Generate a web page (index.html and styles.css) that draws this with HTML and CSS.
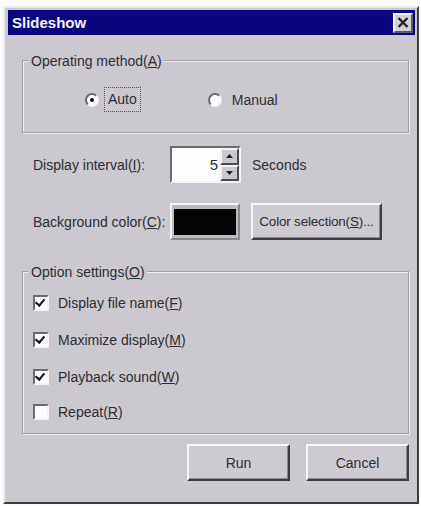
FILE: index.html
```html
<!DOCTYPE html>
<html>
<head>
<meta charset="utf-8">
<link rel="stylesheet" href="styles.css">
</head>
<body>
<div class="window">
  <div class="titlebar">
    <span class="title">Slideshow</span>
    <span class="close">
      <svg width="12" height="11" viewBox="0 0 12 11"><path d="M1.5 1 L10.5 10 M10.5 1 L1.5 10" stroke="#222" stroke-width="2.4"/></svg>
    </span>
  </div>
  <div class="content">
    <div class="group group-method">
      <div class="group-title">Operating method(<u>A</u>)</div>
      <div class="radios">
        <div class="radio-item"><span class="radio checked"></span><span class="focus">Auto</span></div>
        <div class="radio-item manual"><span class="radio"></span><span>Manual</span></div>
      </div>
    </div>
    <div class="row row-interval">
      <span class="label">Display interval(<u>I</u>):</span>
      <div class="spinner">
        <span class="spin-value">5</span>
        <div class="spin-buttons">
          <span class="spin-btn"><svg width="7" height="4" viewBox="0 0 7 4"><path d="M0 4 L3.5 0 L7 4Z" fill="#222"/></svg></span>
          <span class="spin-btn"><svg width="7" height="4" viewBox="0 0 7 4"><path d="M0 0 L3.5 4 L7 0Z" fill="#222"/></svg></span>
        </div>
      </div>
      <span class="unit">Seconds</span>
    </div>
    <div class="row row-color">
      <span class="label">Background color(<u>C</u>):</span>
      <div class="swatch"><div class="swatch-inner"></div></div>
      <button class="btn btn-color">Color selection(<u>S</u>)...</button>
    </div>
    <div class="group group-options">
      <div class="group-title">Option settings(<u>O</u>)</div>
      <div class="checks">
        <div class="check-item"><span class="check checked"></span><span>Display file name(<u>F</u>)</span></div>
        <div class="check-item"><span class="check checked"></span><span>Maximize display(<u>M</u>)</span></div>
        <div class="check-item"><span class="check checked"></span><span>Playback sound(<u>W</u>)</span></div>
        <div class="check-item"><span class="check"></span><span>Repeat(<u>R</u>)</span></div>
      </div>
    </div>
    <div class="actions">
      <button class="btn btn-run">Run</button>
      <button class="btn btn-cancel">Cancel</button>
    </div>
  </div>
</div>
</body>
</html>
```
FILE: styles.css
```css
* { box-sizing: border-box; }
html, body { margin: 0; padding: 0; background: #fbfbfb; }
body {
  font-family: "Liberation Sans", Arial, sans-serif;
  font-size: 14px;
  color: #2e2e33;
}
u { text-decoration: underline; }

.window {
  margin: 6px 0 0 3px;
  width: 416px;
  height: 498px;
  background: #cbc9cf;
  border: 2px solid;
  border-color: #ececee #3c3c40 #3c3c40 #ececee;
  padding: 2px 2px 0 3px;
}

.titlebar {
  height: 25px;
  background: #0b0580;
  display: flex;
  align-items: center;
  justify-content: space-between;
  padding: 0 2px 0 4px;
}
.title {
  color: #f4f4ff;
  font-weight: bold;
  font-size: 15px;
  letter-spacing: 0px;
}
.close {
  width: 20px;
  height: 20px;
  background: #d3d1d7;
  border: 2px solid;
  border-color: #f4f4f6 #5a5a60 #5a5a60 #f4f4f6;
  display: flex;
  align-items: center;
  justify-content: center;
}

.content {
  padding: 0 6px 0 14px;
}

.group {
  border: 1px solid #a09ea6;
  box-shadow: inset 1px 1px 0 #eeedf0, 1px 1px 0 #eeedf0;
  padding: 0 0 0 10px;
}
.group-title {
  display: inline-block;
  background: #cbc9cf;
  padding: 0 2px 0 3px;
  margin-left: -5px;
  line-height: 16px;
  margin-top: -8px;
  vertical-align: top;
}
.group-method {
  margin-top: 25px;
  height: 73px;
}
.radios {
  display: flex;
  align-items: center;
  margin-top: 10px;
  padding-left: 52px;
}
.radio-item {
  display: flex;
  align-items: center;
  gap: 5px;
}
.radio-item.manual {
  margin-left: 67px;
  gap: 10px;
}
.radio {
  width: 14px;
  height: 14px;
  border-radius: 50%;
  background: #fdfdfd;
  border: 2px solid;
  border-color: #6c6a70 #f4f4f6 #f4f4f6 #6c6a70;
  position: relative;
}
.radio.checked::after {
  content: "";
  position: absolute;
  left: 3px;
  top: 3px;
  width: 4px;
  height: 4px;
  border-radius: 50%;
  background: #111;
}
.focus {
  border: 1px dotted #55535a;
  padding: 3px 3px 4px 3px;
}

.row {
  display: flex;
  align-items: center;
}
.label {
  width: 148px;
  padding-left: 11px;
  white-space: nowrap;
}
.row-interval {
  margin-top: 13px;
  height: 37px;
}
.spinner {
  width: 71px;
  height: 37px;
  background: #fdfdfd;
  border: 2px solid;
  border-color: #6c6a70 #f4f4f6 #f4f4f6 #6c6a70;
  display: flex;
  align-items: center;
  justify-content: flex-end;
}
.spin-value {
  font-size: 15px;
  margin-right: 2px;
}
.spin-buttons {
  width: 19px;
  height: 33px;
  display: flex;
  flex-direction: column;
}
.spin-btn {
  flex: 1;
  background: #cbc9cf;
  border: 2px solid;
  border-color: #f4f4f6 #4a4a50 #4a4a50 #f4f4f6;
  display: flex;
  align-items: center;
  justify-content: center;
}
.unit {
  margin-left: 11px;
}
.row-color {
  margin-top: 20px;
  height: 37px;
}
.swatch {
  width: 70px;
  height: 37px;
  border: 2px solid;
  border-color: #f4f4f6 #8a888e #8a888e #f4f4f6;
  padding: 4px 2px 3px 2px;
  background: #bdbbc1;
}
.swatch-inner {
  width: 100%;
  height: 100%;
  background: #050505;
}

.btn {
  font-family: inherit;
  font-size: 14px;
  color: #2e2e33;
  background: #cdcbd1;
  border: 2px solid;
  border-color: #f6f6f8 #3c3c42 #3c3c42 #f6f6f8;
  box-shadow: inset -1px -1px 0 #8a888e;
  padding: 0;
  height: 37px;
  white-space: nowrap;
}
.btn-color {
  margin-left: 11px;
  width: 131px;
  font-size: 13.5px;
  letter-spacing: -0.2px;
}

.group-options {
  margin-top: 31px;
  height: 163px;
}
.checks {
  display: flex;
  flex-direction: column;
  margin-top: 7px;
  gap: 21px;
}
.check-item {
  display: flex;
  align-items: center;
  gap: 9px;
  height: 16px;
}
.check-item:last-child {
  margin-top: -2px;
}
.check {
  width: 16px;
  height: 16px;
  background: #fdfdfd;
  border: 2px solid;
  border-color: #6c6a70 #f4f4f6 #f4f4f6 #6c6a70;
  position: relative;
}
.check.checked::after {
  content: "";
  position: absolute;
  left: 2px;
  top: 0px;
  width: 4px;
  height: 7px;
  border: solid #111;
  border-width: 0 2px 2px 0;
  transform: rotate(40deg);
}

.actions {
  display: flex;
  justify-content: flex-end;
  gap: 16px;
  margin-top: 10px;
  padding-right: 0;
}
.btn-run, .btn-cancel {
  width: 103px;
  height: 37px;
}
```
